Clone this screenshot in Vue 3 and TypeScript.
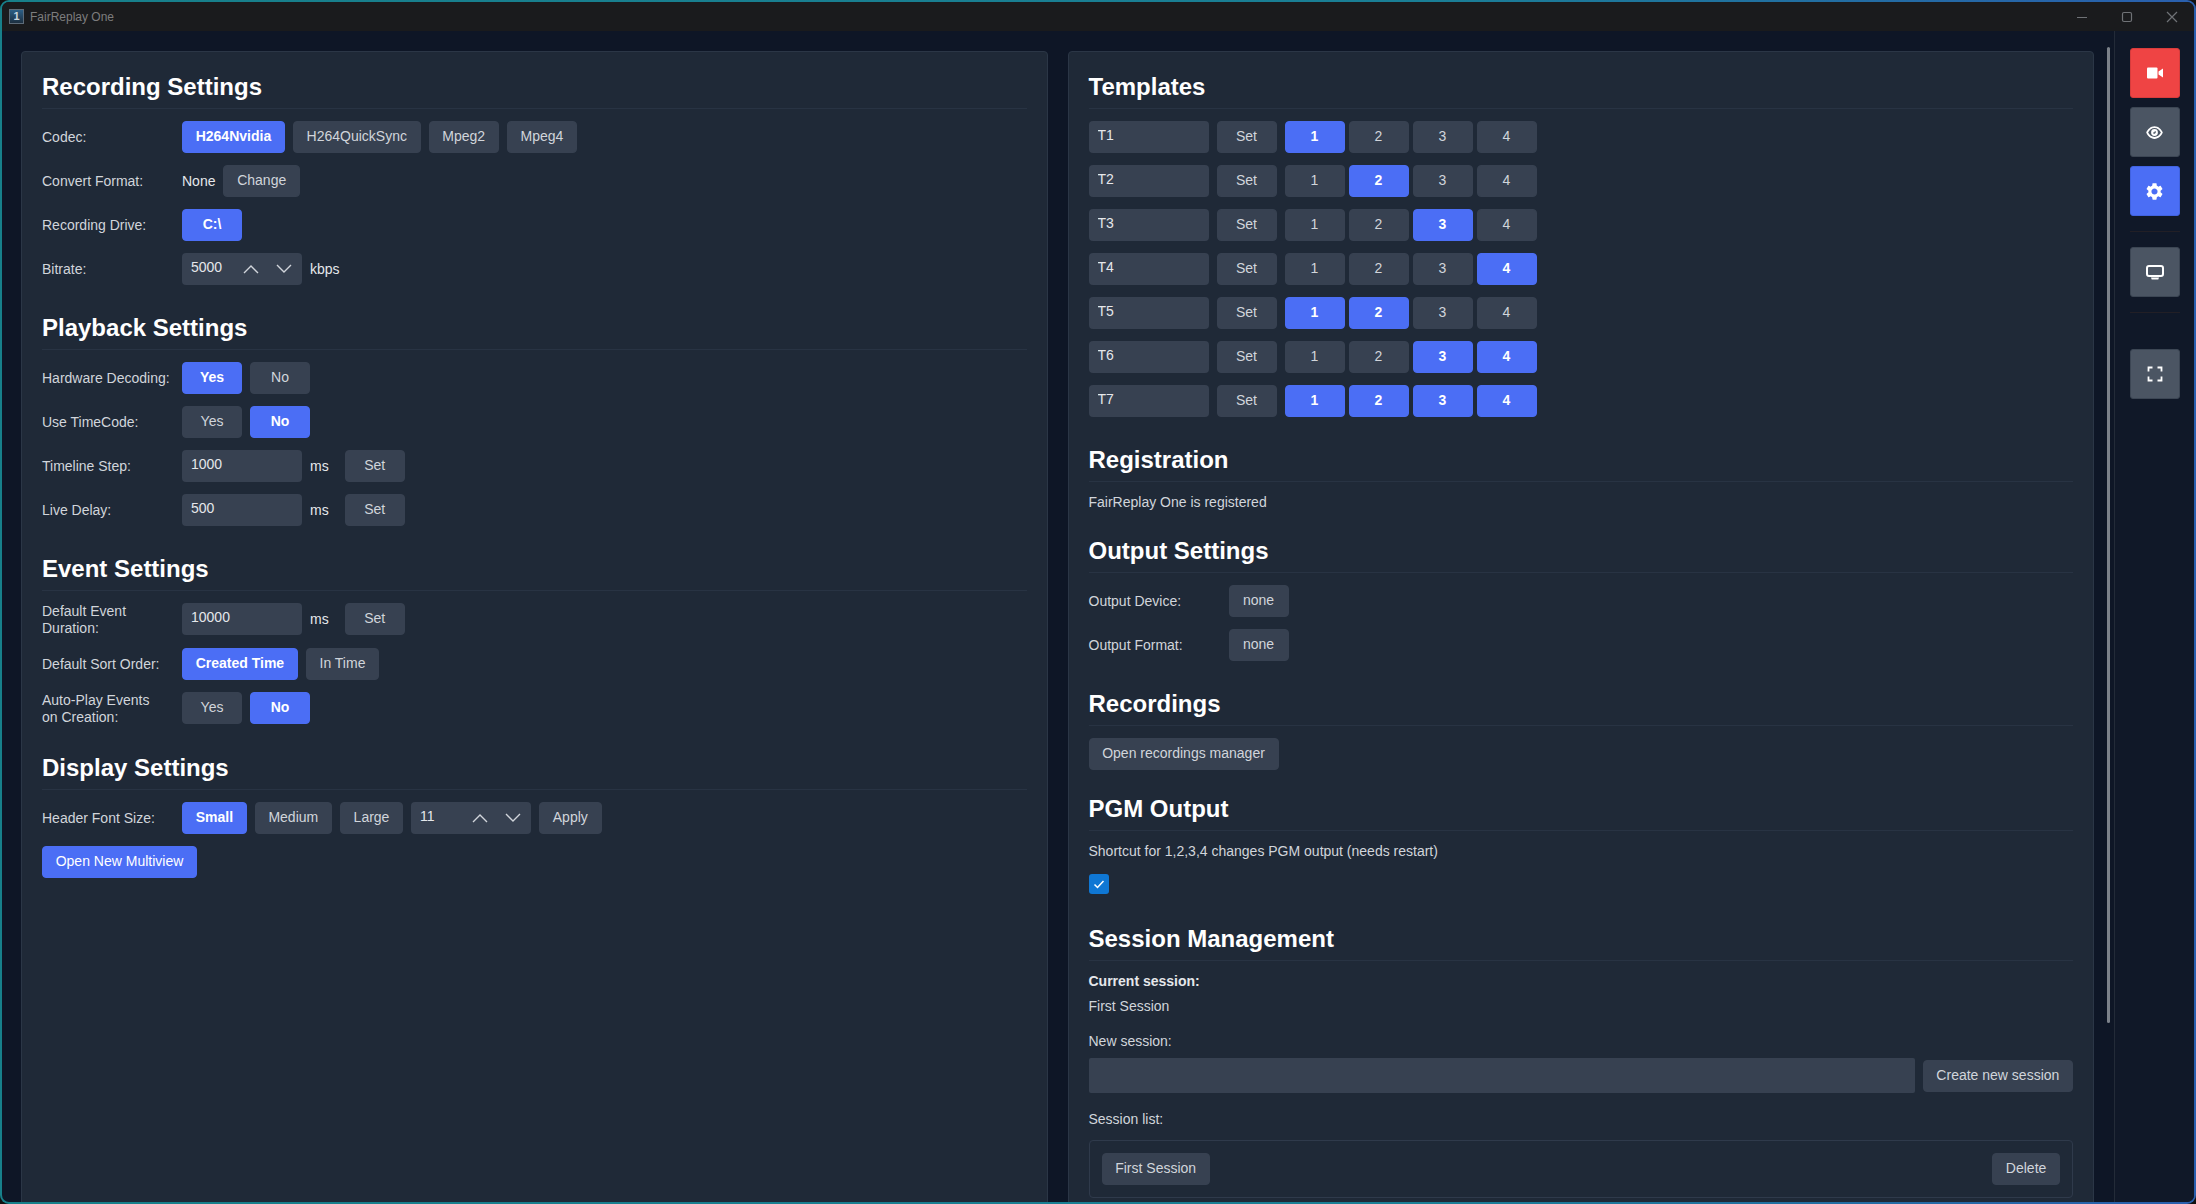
<script setup lang="ts">
// FairReplay One settings page, static data only
const codecs = ['H264Nvidia', 'H264QuickSync', 'Mpeg2', 'Mpeg4']
const templates = [
  { name: 'T1', on: [1] },
  { name: 'T2', on: [2] },
  { name: 'T3', on: [3] },
  { name: 'T4', on: [4] },
  { name: 'T5', on: [1, 2] },
  { name: 'T6', on: [3, 4] },
  { name: 'T7', on: [1, 2, 3, 4] },
]
const gear =
  'M19.14 12.94c.04-.3.06-.61.06-.94 0-.32-.02-.64-.07-.94l2.03-1.58c.18-.14.23-.41.12-.61l-1.92-3.32c-.12-.22-.37-.29-.59-.22l-2.39.96c-.5-.38-1.03-.7-1.62-.94l-.36-2.54c-.04-.24-.24-.41-.48-.41h-3.84c-.24 0-.43.17-.47.41l-.36 2.54c-.59.24-1.13.57-1.62.94l-2.39-.96c-.22-.08-.47 0-.59.22L2.74 8.87c-.12.21-.08.47.12.61l2.03 1.58c-.05.3-.09.63-.09.94s.02.64.07.94l-2.03 1.58c-.18.14-.23.41-.12.61l1.92 3.32c.12.22.37.29.59.22l2.39-.96c.5.38 1.03.7 1.62.94l.36 2.54c.05.24.24.41.48.41h3.84c.24 0 .44-.17.47-.41l.36-2.54c.59-.24 1.13-.56 1.62-.94l2.39.96c.22.08.47 0 .59-.22l1.92-3.32c.12-.22.07-.47-.12-.61l-2.01-1.58zM12 15.6c-1.98 0-3.6-1.62-3.6-3.6s1.62-3.6 3.6-3.6 3.6 1.62 3.6 3.6-1.62 3.6-3.6 3.6z'
</script>

<template>
  <div class="frame">
    <div class="window">
      <header class="titlebar">
        <div class="app-icon">1</div>
        <span class="app-title">FairReplay One</span>
        <div class="win-controls">
          <svg viewBox="0 0 12 12" width="12" height="12"><path d="M1 6.5h10" /></svg>
          <svg viewBox="0 0 12 12" width="12" height="12"><rect x="1.5" y="1.5" width="9" height="9" rx="1.5" /></svg>
          <svg viewBox="0 0 12 12" width="12" height="12"><path d="M1 1l10 10M11 1L1 11" /></svg>
        </div>
      </header>

      <div class="body">
        <main class="content">
          <section class="panel">
            <h2 class="first">Recording Settings</h2>
            <div class="row">
              <label>Codec:</label>
              <button v-for="(c, i) in codecs" :key="c" class="btn" :class="{ active: i === 0 }">{{ c }}</button>
            </div>
            <div class="row">
              <label>Convert Format:</label>
              <span class="none">None</span>
              <button class="btn">Change</button>
            </div>
            <div class="row">
              <label>Recording Drive:</label>
              <button class="btn active">C:\</button>
            </div>
            <div class="row">
              <label>Bitrate:</label>
              <div class="spin">
                <input class="spin-input" value="5000" readonly />
                <svg viewBox="0 0 16 10" width="16" height="10"><path d="M1 9l7-7 7 7" /></svg>
                <svg viewBox="0 0 16 10" width="16" height="10"><path d="M1 1l7 7 7-7" /></svg>
              </div>
              <span>kbps</span>
            </div>

            <h2>Playback Settings</h2>
            <div class="row">
              <label>Hardware Decoding:</label>
              <button class="btn active">Yes</button>
              <button class="btn">No</button>
            </div>
            <div class="row">
              <label>Use TimeCode:</label>
              <button class="btn">Yes</button>
              <button class="btn active">No</button>
            </div>
            <div class="row">
              <label>Timeline Step:</label>
              <input class="field" value="1000" readonly />
              <span class="unit">ms</span>
              <button class="btn">Set</button>
            </div>
            <div class="row">
              <label>Live Delay:</label>
              <input class="field" value="500" readonly />
              <span class="unit">ms</span>
              <button class="btn">Set</button>
            </div>

            <h2>Event Settings</h2>
            <div class="row">
              <label>Default Event<br />Duration:</label>
              <input class="field" value="10000" readonly />
              <span class="unit">ms</span>
              <button class="btn">Set</button>
            </div>
            <div class="row">
              <label>Default Sort Order:</label>
              <button class="btn active">Created Time</button>
              <button class="btn">In Time</button>
            </div>
            <div class="row">
              <label>Auto-Play Events<br />on Creation:</label>
              <button class="btn">Yes</button>
              <button class="btn active">No</button>
            </div>

            <h2>Display Settings</h2>
            <div class="row">
              <label>Header Font Size:</label>
              <button class="btn active">Small</button>
              <button class="btn">Medium</button>
              <button class="btn">Large</button>
              <div class="spin">
                <input class="spin-input" value="11" readonly />
                <svg viewBox="0 0 16 10" width="16" height="10"><path d="M1 9l7-7 7 7" /></svg>
                <svg viewBox="0 0 16 10" width="16" height="10"><path d="M1 1l7 7 7-7" /></svg>
              </div>
              <button class="btn">Apply</button>
            </div>
            <div class="row">
              <button class="btn active plain">Open New Multiview</button>
            </div>
          </section>

          <section class="panel">
            <h2 class="first">Templates</h2>
            <div v-for="t in templates" :key="t.name" class="row">
              <input class="field" :value="t.name" readonly />
              <button class="btn">Set</button>
              <div class="pgm-group">
                <button
                  v-for="n in 4"
                  :key="n"
                  class="btn"
                  :class="{ active: t.on.includes(n) }"
                >{{ n }}</button>
              </div>
            </div>

            <h2>Registration</h2>
            <p class="note">FairReplay One is registered</p>

            <h2 class="after-note">Output Settings</h2>
            <div class="row">
              <label>Output Device:</label>
              <button class="btn">none</button>
            </div>
            <div class="row">
              <label>Output Format:</label>
              <button class="btn">none</button>
            </div>

            <h2>Recordings</h2>
            <div class="row tight">
              <button class="btn">Open recordings manager</button>
            </div>

            <h2>PGM Output</h2>
            <p class="note">Shortcut for 1,2,3,4 changes PGM output (needs restart)</p>
            <div class="check">
              <svg viewBox="0 0 20 20" width="20" height="20"><path d="M5.5 10.5l3 3 6-6.5" /></svg>
            </div>

            <h2 class="session-head">Session Management</h2>
            <div class="session-line strong">Current session:</div>
            <div class="session-line gap-9">First Session</div>
            <div class="session-line gap-19">New session:</div>
            <div class="new-session">
              <input class="session-input" readonly />
              <button class="btn">Create new session</button>
            </div>
            <div class="session-line gap-18">Session list:</div>
            <div class="session-list">
              <button class="btn">First Session</button>
              <button class="btn">Delete</button>
            </div>
          </section>
        </main>

        <div class="scroll-thumb"></div>

        <aside class="sidebar">
          <button class="side-btn red">
            <svg viewBox="0 0 16 16" width="16" height="16" class="fill">
              <rect x="0" y="2.5" width="10.5" height="11" rx="1" />
              <path d="M11.5 6.5l4.5-3v9l-4.5-3z" />
            </svg>
          </button>
          <button class="side-btn">
            <svg viewBox="0 0 16 16" width="17" height="17" class="fill">
              <path
                fill-rule="evenodd"
                d="M8 2C4.4 2 1.5 4.8.2 8c1.3 3.2 4.2 6 7.8 6s6.5-2.8 7.8-6C14.500 4.800 11.600 2 8 2zM8 3.800c2.600 0 4.800 1.800 6 4.200-1.200 2.400-3.400 4.200-6 4.200S3.200 10.400 2 8c1.200-2.400 3.400-4.200 6-4.200zM8 4.800a3.200 3.200 0 1 0 0 6.400 3.200 3.200 0 0 0 0-6.400zm.5 1.500a1.500 1.500 0 1 1-2.100 2 2.100 2.100 0 0 0 2.100-2z"
              />
            </svg>
          </button>
          <button class="side-btn blue">
            <svg viewBox="2 2 20 20" width="17" height="17" class="fill"><path :d="gear" /></svg>
          </button>
          <div class="side-sep"></div>
          <button class="side-btn">
            <svg viewBox="0 0 18 15" width="18" height="15" class="fill">
              <path
                fill-rule="evenodd"
                d="M3 0h12a3 3 0 0 1 3 3v6a3 3 0 0 1-3 3H3a3 3 0 0 1-3-3V3a3 3 0 0 1 3-3zM3 2a1 1 0 0 0-1 1v6a1 1 0 0 0 1 1h12a1 1 0 0 0 1-1V3a1 1 0 0 0-1-1zM5 12.500h8l-.7 2H5.700z"
              />
            </svg>
          </button>
          <div class="side-sep"></div>
          <button class="side-btn push">
            <svg viewBox="0 0 16 16" width="16" height="16" class="line">
              <path d="M1.5 5.500v-4h4M10.500 1.500h4v4M14.500 10.500v4h-4M5.500 14.500h-4v-4" />
            </svg>
          </button>
        </aside>
      </div>
    </div>
  </div>
</template>

<style scoped>
.frame {
  height: 100vh;
  box-sizing: border-box;
  padding: 2px;
  border-radius: 9px;
  background: linear-gradient(90deg, #17808a 0%, #1a7f96 65%, #2a5fae 100%);
}

.window {
  height: 100%;
  display: flex;
  flex-direction: column;
  border-radius: 7px;
  overflow: hidden;
  background: #0e1626;
  color: #d1d5db;
  font: 14px/16px "Liberation Sans", Arial, sans-serif;
}

.titlebar {
  flex: 0 0 29px;
  display: flex;
  align-items: center;
  padding-left: 7px;
  background: #1a1b1d;
}

.app-icon {
  width: 15px;
  height: 15px;
  box-sizing: border-box;
  border: 1px solid #5d6b78;
  background: linear-gradient(#2c5f86, #1c2f40);
  color: #c9d6de;
  font: bold 11px/13px "Liberation Sans", Arial, sans-serif;
  text-align: center;
}

.app-title {
  margin-left: 6px;
  color: #7d7d7d;
  font: 12px "Liberation Sans", Arial, sans-serif;
}

.win-controls {
  margin-left: auto;
  display: flex;
  gap: 33px;
  padding-right: 16px;
  fill: none;
  stroke: #6f7276;
  stroke-width: 1.2;
}

.body {
  flex: 1;
  min-height: 0;
  display: flex;
  position: relative;
}

.content {
  flex: 1;
  min-width: 0;
  display: grid;
  grid-template-columns: 1fr 1fr;
  column-gap: 20px;
  padding: 20px 20px 0 19px;
  overflow: hidden;
}

.panel {
  box-sizing: border-box;
  display: flex;
  flex-direction: column;
  height: 1240px;
  padding: 20px;
  border: 1px solid #2b3646;
  border-radius: 4px;
  background: #1f2937;
}

h2 {
  margin: 16px 0 12px;
  padding: 1px 0 7px;
  border-bottom: 1px solid #283343;
  color: #fff;
  font-size: 24px;
  line-height: 28px;
  font-weight: 700;
}

h2.first {
  margin-top: 0;
}

h2.after-note {
  margin-top: 26px;
}

.row {
  display: flex;
  align-items: flex-start;
  gap: 8px;
  margin-bottom: 12px;
  min-height: 32px;
}

.row.tight {
  margin-bottom: 8px;
}

.row > label {
  flex: 0 0 132px;
  align-self: center;
  line-height: 16.5px;
}

.row > span {
  line-height: 32px;
  color: #e5e7eb;
}

.row > .none {
  margin-right: 0;
}

.btn {
  box-sizing: border-box;
  height: 32px;
  min-width: 60px;
  padding: 0 12.7px 2px;
  border: 1px solid #374151;
  border-radius: 4px;
  background: #374151;
  color: #d1d5db;
  font: 14px/16px "Liberation Sans", Arial, sans-serif;
  white-space: nowrap;
}

.btn.active {
  border-color: #4b6ef5;
  background: #4b6ef5;
  color: #fff;
  font-weight: 700;
}

.btn.plain {
  font-weight: 400;
}

.field,
.spin {
  box-sizing: border-box;
  width: 120px;
  height: 32px;
  border: 0;
  border-radius: 4px;
  background: #374151;
}

.field,
.spin-input {
  padding: 0 9px 5px;
  color: #e5e7eb;
  font: 14px/16px "Liberation Sans", Arial, sans-serif;
  outline: none;
}

.spin {
  display: flex;
  align-items: center;
}

.spin-input {
  flex: none;
  width: 61px;
  height: 32px;
  box-sizing: border-box;
  border: 0;
  background: transparent;
}

.spin svg {
  flex: none;
  fill: none;
  stroke: #d1d5db;
  stroke-width: 1.4;
  margin-right: 17px;
}

.spin svg:last-child {
  margin-right: 0;
}

.unit {
  margin-right: 8px;
}

.pgm-group {
  display: flex;
  gap: 4px;
}

.note {
  margin: 0;
  color: #d1d5db;
}

.check {
  width: 20px;
  height: 20px;
  margin-top: 15px;
  border-radius: 3px;
  background: #0f77d4;
}

.check svg {
  display: block;
  fill: none;
  stroke: #fff;
  stroke-width: 1.5;
}

.session-head {
  margin-top: 30px;
}

.session-line {
  color: #d1d5db;
}

.strong {
  color: #e5e7eb;
  font-weight: 700;
}

.gap-9 {
  margin-top: 9px;
}

.gap-19 {
  margin-top: 19px;
}

.gap-18 {
  margin-top: 18px;
}

.new-session {
  display: flex;
  align-items: center;
  gap: 8px;
  margin-top: 9px;
}

.session-input {
  flex: 1;
  min-width: 0;
  box-sizing: border-box;
  height: 35px;
  border: 0;
  border-radius: 2px;
  background: #374151;
}

.session-list {
  display: flex;
  justify-content: space-between;
  box-sizing: border-box;
  height: 58px;
  margin-top: 13px;
  padding: 12px;
  border: 1px solid #2f3a4b;
  border-radius: 4px;
}

.scroll-thumb {
  position: absolute;
  top: 16px;
  right: 84px;
  width: 3px;
  height: 976px;
  border-radius: 2px;
  background: #7c828a;
}

.sidebar {
  flex: 0 0 80px;
  box-sizing: border-box;
  display: flex;
  flex-direction: column;
  align-items: center;
  padding-top: 17px;
  border-left: 1px solid #232b38;
  background: #101828;
}

.side-btn {
  display: flex;
  align-items: center;
  justify-content: center;
  flex: none;
  box-sizing: border-box;
  width: 50px;
  height: 50px;
  margin-bottom: 9px;
  padding: 0;
  border: 1px solid #3c4654;
  border-radius: 3px;
  background: #4b5563;
}

.side-btn.red {
  border-color: #d83c3c;
  background: #ef4444;
}

.side-btn.blue {
  border-color: #4062e0;
  background: #4b6ef5;
}

.side-btn.push {
  margin-top: 21px;
}

.side-sep {
  flex: none;
  width: 50px;
  height: 1px;
  margin: 6px 0 15px;
  background: #221f26;
}

.fill {
  fill: #fff;
}

.line {
  fill: none;
  stroke: #fff;
  stroke-width: 1.8;
}
</style>

<style>
html,
body {
  margin: 0;
  height: 100%;
  overflow: hidden;
  background: #111;
}
</style>
